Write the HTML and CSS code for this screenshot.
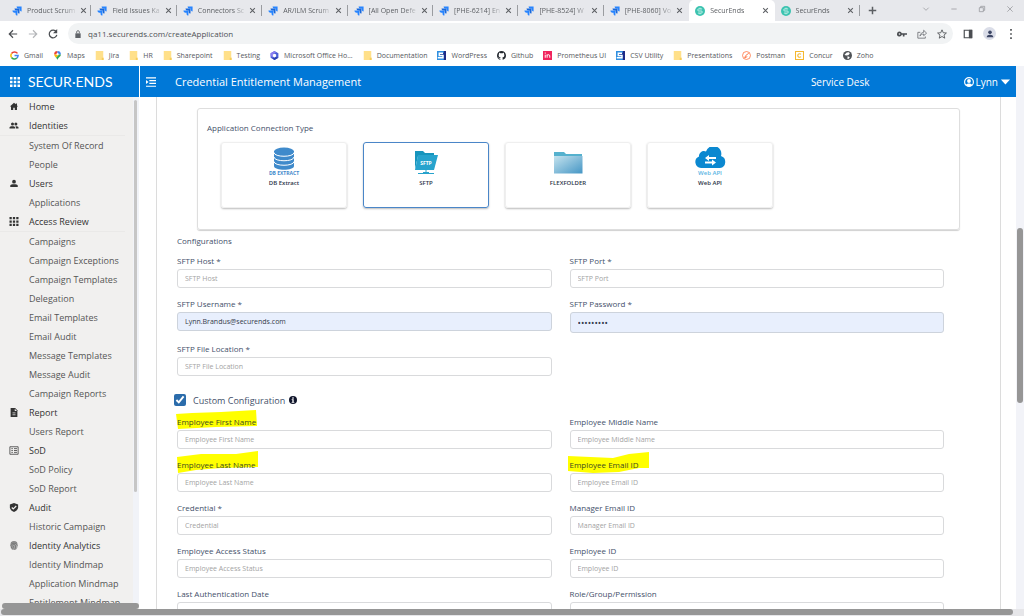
FILE: index.html
```html
<!DOCTYPE html>
<html lang="en">
<head>
    <meta charset="UTF-8">
    <meta name="viewport" content="width=device-width, initial-scale=1.0">
    <title>SecurEnds</title>
    <link rel="stylesheet" href="styles.css">
</head>
<body>

<svg class="sprite" aria-hidden="true">
    <symbol id="i-jira" viewBox="0 0 24 24">
        <path fill="#2684ff" d="M11 1h12v12c-3 0-4.500-2-4.500-4.500V6H16c-3 0-5-2-5-5z"/>
        <path fill="#1868db" d="M6 6h12v12c-3 0-4.500-2-4.500-4.500V11H11c-3 0-5-2-5-5z"/>
        <path fill="#2684ff" d="M1 11h12v12c-3 0-4.500-2-4.500-4.500V16H6c-3 0-5-2-5-5z"/>
    </symbol>
    <symbol id="i-securends" viewBox="0 0 24 24">
        <circle cx="12" cy="12" r="12" fill="#3cc3b0"/>
        <path d="M17 7H9a2.500 2.500 0 0 0 0 5h6a2.500 2.500 0 0 1 0 5H7M12 4v3M12 17v3" fill="none" stroke="#d9f7f2" stroke-width="2"/>
    </symbol>
    <symbol id="i-close" viewBox="0 0 12 12"><path d="M2 2l8 8M10 2l-8 8" stroke="currentColor" stroke-width="1.800"/></symbol>
    <symbol id="i-folder" viewBox="0 0 12 12"><path d="M1 0h10v9h1v3H1z" fill="#ffe08a"/><path d="M11 9v3H9V9z" fill="#f5cd5c"/></symbol>
    <symbol id="i-s" viewBox="0 0 12 12"><path d="M0 0h12v12H0z" fill="#1d2a86"/><path d="M0 0h9v3H4v2h5v7H0z" fill="#2f8fe0"/><path d="M8 3H3v3h5v3H1" fill="none" stroke="#fff" stroke-width="1.800"/></symbol>
    <symbol id="i-grid" viewBox="0 0 12 12"><path d="M0 0h3v3H0zM4.500 0h3v3h-3zM9 0h3v3H9zM0 4.500h3v3H0zM4.500 4.500h3v3h-3zM9 4.500h3v3H9zM0 9h3v3H0zM4.500 9h3v3h-3zM9 9h3v3H9z" fill="currentColor"/></symbol>
</svg>

<nav class="tab-strip" aria-label="Tabs">
    <div class="tabs">
        <div class="tab"><svg class="favicon"><use href="#i-jira"/></svg><span class="tab-title">Product Scrum</span><button aria-label="Close"><svg><use href="#i-close"/></svg></button></div>
        <div class="tab"><svg class="favicon"><use href="#i-jira"/></svg><span class="tab-title">Field Issues Ka</span><button aria-label="Close"><svg><use href="#i-close"/></svg></button></div>
        <div class="tab"><svg class="favicon"><use href="#i-jira"/></svg><span class="tab-title">Connectors Sc</span><button aria-label="Close"><svg><use href="#i-close"/></svg></button></div>
        <div class="tab"><svg class="favicon"><use href="#i-jira"/></svg><span class="tab-title">AR/ILM Scrum</span><button aria-label="Close"><svg><use href="#i-close"/></svg></button></div>
        <div class="tab"><svg class="favicon"><use href="#i-jira"/></svg><span class="tab-title">[All Open Defe</span><button aria-label="Close"><svg><use href="#i-close"/></svg></button></div>
        <div class="tab"><svg class="favicon"><use href="#i-jira"/></svg><span class="tab-title">[PHE-6214] En</span><button aria-label="Close"><svg><use href="#i-close"/></svg></button></div>
        <div class="tab"><svg class="favicon"><use href="#i-jira"/></svg><span class="tab-title">[PHE-8524] W</span><button aria-label="Close"><svg><use href="#i-close"/></svg></button></div>
        <div class="tab no-line"><svg class="favicon"><use href="#i-jira"/></svg><span class="tab-title">[PHE-8060] Vo</span><button aria-label="Close"><svg><use href="#i-close"/></svg></button></div>
        <div class="tab active no-line"><svg class="favicon"><use href="#i-securends"/></svg><span class="tab-title">SecurEnds</span><button aria-label="Close"><svg><use href="#i-close"/></svg></button></div>
        <div class="tab"><svg class="favicon"><use href="#i-securends"/></svg><span class="tab-title">SecurEnds</span><button aria-label="Close"><svg><use href="#i-close"/></svg></button></div>
    </div>
    <button class="new-tab" aria-label="New tab"><svg viewBox="0 0 12 12"><path d="M6 1v10M1 6h10" stroke="currentColor" stroke-width="2"/></svg></button>
    <div class="window-buttons">
        <button aria-label="Search tabs"><svg viewBox="0 0 12 12"><path d="M2 4l4 4 4-4" fill="none" stroke="currentColor"/></svg></button>
        <button aria-label="Minimize"><svg viewBox="0 0 12 12"><path d="M2 6h8" stroke="currentColor"/></svg></button>
        <button aria-label="Restore"><svg viewBox="0 0 12 12"><path d="M2 4h6v6H2zM4 4V2h6v6H8" fill="none" stroke="currentColor"/></svg></button>
        <button aria-label="Close window"><svg viewBox="0 0 12 12"><path d="M2 2l8 8M10 2l-8 8" stroke="currentColor"/></svg></button>
    </div>
</nav>

<div class="toolbar">
    <button aria-label="Back"><svg viewBox="0 0 12 12"><path d="M11 6H2M6 1.500L1.500 6 6 10.500" fill="none" stroke="#4a4d51" stroke-width="1.400"/></svg></button>
    <button aria-label="Forward"><svg viewBox="0 0 12 12"><path d="M1 6h9M6 1.500L10.500 6 6 10.500" fill="none" stroke="#b4b6b9" stroke-width="1.400"/></svg></button>
    <button aria-label="Reload"><svg viewBox="0 0 12 12"><path d="M10 3.500A4.600 4.600 0 1 0 10.600 7" fill="none" stroke="#4a4d51" stroke-width="1.500"/><path d="M11 0v5H6z" fill="#4a4d51"/></svg></button>
    <div class="omnibox">
        <svg class="lock" viewBox="0 0 12 12"><path d="M2 5h8v7H2z" fill="#5f6368"/><path d="M4 5V3a2 2 0 0 1 4 0v2" fill="none" stroke="#5f6368" stroke-width="1.300"/></svg>
        <input class="url" aria-label="Address" value="qa11.securends.com/createApplication">
        <svg viewBox="0 0 12 12"><path d="M3 3a3 3 0 1 0 2.800 4H7v2h2V7h3V5H5.800A3 3 0 0 0 3 3z" fill="#4a4d51"/><circle cx="3" cy="6" r="1" fill="#f1f3f4"/></svg>
        <svg viewBox="0 0 12 12"><path d="M4 4H1v7h9V9M3.500 8.500C4 5.500 6 4 8 4V1.500L11.500 5 8 8V6C6 6 4.500 7 3.500 8.500z" fill="none" stroke="#6c6f73"/></svg>
        <svg viewBox="0 0 12 12"><path d="M6 1l1.500 3.500 3.800.3-2.900 2.500.9 3.700L6 9l-3.300 2 .9-3.700L.7 4.800l3.800-.3z" fill="none" stroke="#4a4d51"/></svg>
    </div>
    <button aria-label="Side panel"><svg viewBox="0 0 12 12"><path d="M1.500 1.500h9v9h-9z" fill="none" stroke="#4a4d51" stroke-width="1.400"/><path d="M7 1h4v10H7z" fill="#4a4d51"/></svg></button>
    <button class="profile" aria-label="Profile"><svg viewBox="0 0 12 12"><circle cx="6" cy="3.500" r="2.700" fill="#3c4664"/><path d="M1 11c0-5 10-5 10 0z" fill="#3c4664"/></svg></button>
    <button aria-label="Menu"><svg viewBox="0 0 12 12"><path d="M5 0h2v2H5zM5 5h2v2H5zM5 10h2v2H5z" fill="#4a4d51"/></svg></button>
</div>

<nav class="bookmarks" aria-label="Bookmarks">
    <a href="#"><svg viewBox="0 0 12 12"><path d="M10 3.200A5 5 0 0 0 2 3.400" fill="none" stroke="#ea4335" stroke-width="2"/><path d="M2 3.400a5 5 0 0 0 0 5.200" fill="none" stroke="#fbbc05" stroke-width="2"/><path d="M2 8.600a5 5 0 0 0 7 1" fill="none" stroke="#34a853" stroke-width="2"/><path d="M9 9.600A5 5 0 0 0 10.800 6H6" fill="none" stroke="#4285f4" stroke-width="2"/></svg>Gmail</a>
    <a href="#"><svg viewBox="0 0 12 12"><path d="M6 0a4.500 4.500 0 0 0-4.500 4.500L6 4.500z" fill="#ea4335"/><path d="M6 0a4.500 4.500 0 0 1 4.500 4.500H6z" fill="#4285f4"/><path d="M1.500 4.500C1.500 6 3 7.500 4 9l4-4.500z" fill="#fbbc05"/><path d="M10.500 4.500C10.500 7.500 7 8 6 12 5.500 10.500 5 10 4 9l4-4.500z" fill="#34a853"/><circle cx="6" cy="4.300" r="1.500" fill="#fff"/></svg>Maps</a>
    <a href="#"><svg><use href="#i-folder"/></svg>Jira</a>
    <a href="#"><svg><use href="#i-folder"/></svg>HR</a>
    <a href="#"><svg><use href="#i-folder"/></svg>Sharepoint</a>
    <a href="#"><svg><use href="#i-folder"/></svg>Testing</a>
    <a href="#"><svg viewBox="0 0 12 12"><path d="M6 0l5.200 3v6L6 12 .8 9V3z" fill="#4b5fd6"/><path d="M6 0L.8 3v4L4 8V4l4-2z" fill="#8a7df0"/><path d="M11.200 9L6 12 3 10l5-2z" fill="#2b3fae"/><path d="M6 3.500l2.200 1.200v2.600L6 8.500 3.800 7.300V4.700z" fill="#fff"/></svg>Microsoft Office Ho...</a>
    <a href="#"><svg><use href="#i-folder"/></svg>Documentation</a>
    <a href="#"><svg><use href="#i-s"/></svg>WordPress</a>
    <a href="#"><svg viewBox="0 0 16 16"><path fill="#24292f" d="M8 0C3.580 0 0 3.580 0 8c0 3.540 2.290 6.530 5.470 7.590.4.070.55-.17.55-.38v-1.490c-2.010.37-2.530-.49-2.690-.94-.09-.23-.48-.94-.82-1.130-.28-.15-.68-.52-.01-.53.63-.01 1.080.58 1.230.82.72 1.210 1.870.87 2.330.66.07-.52.28-.87.51-1.070-1.780-.2-3.640-.89-3.640-3.950 0-.87.31-1.590.82-2.150-.08-.2-.36-1.020.08-2.120 0 0 .67-.21 2.200.82a7.600 7.600 0 0 1 4 0c1.530-1.040 2.200-.82 2.200-.82.44 1.100.16 1.920.08 2.120.51.56.82 1.270.82 2.150 0 3.070-1.870 3.750-3.650 3.950.29.25.54.73.54 1.480v2.200c0 .21.15.46.55.38A8 8 0 0 0 16 8c0-4.420-3.580-8-8-8z"/></svg>Github</a>
    <a href="#"><svg viewBox="0 0 12 12"><path d="M0 0h12v12H0z" fill="#f0245c"/><path d="M3 5v4M3 2v1.500M5.500 9V4.500M5.500 6C6 4.500 9 4.500 9 6.500V9" fill="none" stroke="#fff" stroke-width="1.300"/></svg>Prometheus UI</a>
    <a href="#"><svg><use href="#i-s"/></svg>CSV Utility</a>
    <a href="#"><svg><use href="#i-folder"/></svg>Presentations</a>
    <a href="#"><svg viewBox="0 0 12 12"><circle cx="6" cy="6" r="5.300" fill="#fff" stroke="#ff6c37"/><path d="M9 3L5 6l-1.500 3L7 7.500" fill="none" stroke="#ff6c37" stroke-width="1.200"/></svg>Postman</a>
    <a href="#"><svg viewBox="0 0 12 12"><path d="M.7.7h10.600v10.600H.7z" fill="#fff" stroke="#f5b82e" stroke-width="1.400"/><path d="M8 4.500a2.400 2.400 0 1 0 0 3" fill="none" stroke="#f5b82e" stroke-width="1.500"/></svg>Concur</a>
    <a href="#"><svg viewBox="0 0 12 12"><circle cx="6" cy="6" r="6" fill="#4f5256"/><path d="M5 2l3-.5 1 2-2 2-3 .5-2-1M6 7l3 1-1 2-2 1z" fill="#fff"/></svg>Zoho</a>
</nav>

<div class="viewport">
    <div class="page">
        <aside class="sidebar">
            <div class="brand">
                <svg class="apps"><use href="#i-grid"/></svg>
                <span class="logo">SECUR·ENDS</span>
            </div>
            <div class="side-scroll">
                <ul class="menu">
                    <li><a class="group" href="#"><svg viewBox="0 0 24 24"><path d="M12 2L1 12h3v9h6v-6h4v6h6v-9h3l-3-3V4h-3v2z" fill="currentColor"/></svg>Home</a></li>
                    <li><a class="group" href="#"><svg viewBox="0 0 24 24"><circle cx="8" cy="8" r="4" fill="currentColor"/><circle cx="17" cy="8" r="4" fill="currentColor"/><path d="M0 20v-3c0-4 15-4 15 0v3zM17 20v-3l-1-3c3 0 8 0 8 3v3z" fill="currentColor"/></svg>Identities</a>
                        <ul class="lined"><li><a href="#">System Of Record</a></li><li><a href="#">People</a></li></ul></li>
                    <li><a class="group" href="#"><svg viewBox="0 0 24 24"><circle cx="12" cy="7" r="5" fill="currentColor"/><path d="M2 21v-3c0-5 20-5 20 0v3z" fill="currentColor"/></svg>Users</a>
                        <ul><li><a href="#">Applications</a></li></ul></li>
                    <li><a class="group" href="#"><svg><use href="#i-grid"/></svg>Access Review</a>
                        <ul class="lined">
                            <li><a href="#">Campaigns</a></li>
                            <li><a href="#">Campaign Exceptions</a></li>
                            <li><a href="#">Campaign Templates</a></li>
                            <li><a href="#">Delegation</a></li>
                            <li><a href="#">Email Templates</a></li>
                            <li><a href="#">Email Audit</a></li>
                            <li><a href="#">Message Templates</a></li>
                            <li><a href="#">Message Audit</a></li>
                            <li><a href="#">Campaign Reports</a></li>
                        </ul></li>
                    <li><a class="group" href="#"><svg viewBox="0 0 24 24"><path d="M3 0h12l6 6v18H3z" fill="currentColor"/><path d="M8 13h8M8 18h8" fill="none" stroke="#f1f0ef" stroke-width="2"/><path d="M14 2v6h6z" fill="#f1f0ef"/></svg>Report</a>
                        <ul><li><a href="#">Users Report</a></li></ul></li>
                    <li><a class="group" href="#"><svg viewBox="0 0 24 24"><path d="M1 2h22v20H1z" fill="none" stroke="currentColor" stroke-width="2"/><path d="M5 7h4M5 12h4M5 17h4M12 7h8M12 12h8M12 17h8" stroke="currentColor" stroke-width="2"/></svg>SoD</a>
                        <ul><li><a href="#">SoD Policy</a></li><li><a href="#">SoD Report</a></li></ul></li>
                    <li><a class="group" href="#"><svg viewBox="0 0 24 24"><path d="M12 0L1 4v7c0 6 5 11 11 13 6-2 11-7 11-13V4z" fill="currentColor"/><path d="M6 12l4 4 8-8" fill="none" stroke="#f1f0ef" stroke-width="3"/></svg>Audit</a>
                        <ul><li><a href="#">Historic Campaign</a></li></ul></li>
                    <li><a class="group" href="#"><svg viewBox="0 0 24 24"><path d="M12 0c7 0 10 4 10 11s-3 13-10 13S2 18 2 11 5 0 12 0z" fill="#a8a8a8"/><path d="M4 6c4-5 12-5 16 0M3 12c2-8 16-8 18 0M5 19c2-4 0-6 3-9 3-2 8-1 8 4 0 4-1 6-2 9M8 22c3-5 1-8 4-9" fill="none" stroke="#666" stroke-width="2"/></svg>Identity Analytics</a>
                        <ul>
                            <li><a href="#">Identity Mindmap</a></li>
                            <li><a href="#">Application Mindmap</a></li>
                            <li><a href="#">Entitlement Mindmap</a></li>
                        </ul></li>
                </ul>
                <div class="side-track"><div class="side-thumb"></div></div>
            </div>
            <div class="side-bar-x"></div>
        </aside>

        <main class="main">
            <header class="topbar">
                <button class="toggle" aria-label="Toggle menu"><svg viewBox="0 0 12 12"><path d="M0 1h12M4 4.300h8M4 7.600h8M0 11h12" stroke="currentColor" stroke-width="1.300"/><path d="M0 3.500v5L3 6z" fill="currentColor"/></svg></button>
                <h1>Credential Entitlement Management</h1>
                <a class="service" href="#">Service Desk</a>
                <button class="user"><svg viewBox="0 0 12 12"><circle cx="6" cy="6" r="5.300" fill="none" stroke="currentColor" stroke-width="1.400"/><circle cx="6" cy="4.800" r="2.300" fill="currentColor"/><path d="M2 10c1-3 7-3 8 0-2 2-6 2-8 0z" fill="currentColor"/></svg>Lynn<svg class="caret" viewBox="0 0 12 12"><path d="M1 3h11L6.500 9z" fill="currentColor"/></svg></button>
            </header>

            <div class="content">
                <form class="sheet">
                    <section class="panel">
                        <h2>Application Connection Type</h2>
                        <div class="types">
                            <button type="button" class="type">
                                <svg class="art" viewBox="0 0 34 30"><path d="M7 4v15c0 5 20 5 20 0V4z" fill="#3f8acb"/><ellipse cx="17" cy="4.500" rx="10" ry="4" fill="#3f8acb"/><path d="M7 5.500c0 5 20 5 20 0M7 10c0 5 20 5 20 0M7 14.500c0 5 20 5 20 0" fill="none" stroke="#fff"/><text class="art-bold" x="17" y="28" fill="#3f8acb">DB EXTRACT</text></svg>
                                DB Extract
                            </button>
                            <button type="button" class="type selected">
                                <svg class="art" viewBox="0 0 34 30"><path d="M6 22V4h8l2 2h9v3H9z" fill="#1795bd"/><path d="M9 8h20l-4 15H6z" fill="#27a3cd"/><path d="M17 23v3M9 26.500h16" stroke="#27a3cd"/><path d="M14 25h6v2h-6z" fill="#27a3cd"/><text class="art-bold" x="17" y="18" fill="#fff">SFTP</text></svg>
                                SFTP
                            </button>
                            <button type="button" class="type">
                                <svg class="art" viewBox="0 0 34 30"><defs><linearGradient id="fold" x1="0" y1="0" x2="1" y2="1"><stop offset="0" stop-color="#c5e3ee"/><stop offset="1" stop-color="#4596c5"/></linearGradient></defs><path d="M3 5h10l2 2h16v6H3z" fill="#55b1ce"/><path d="M3 9h28.500v17.500H3z" fill="url(#fold)"/></svg>
                                FLEXFOLDER
                            </button>
                            <button type="button" class="type">
                                <svg class="art" viewBox="0 0 34 30"><path d="M8 21a6 6 0 0 1-2-11.500 5 5 0 0 1 7-5 7.500 7.500 0 0 1 15 4.500 6.200 6.200 0 0 1-1 12z" fill="#0b88d0"/><path d="M15 11h8M12 15.500h8" stroke="#fff" stroke-width="2"/><path d="M16 8v6l-4-3zM19 12.500v6l4-3z" fill="#fff"/><text class="art-text" x="17" y="28" fill="#5ab4e3">Web API</text></svg>
                                Web API
                            </button>
                        </div>
                    </section>

                    <h2 class="section-title">Configurations</h2>
                    <div class="fields">
                        <div class="field"><label for="host">SFTP Host *</label><input id="host" type="text" placeholder="SFTP Host"></div>
                        <div class="field"><label for="port">SFTP Port *</label><input id="port" type="text" placeholder="SFTP Port"></div>
                        <div class="field"><label for="username">SFTP Username *</label><input id="username" class="filled" type="text" value="Lynn.Brandus@securends.com"></div>
                        <div class="field"><label for="password">SFTP Password *</label><input id="password" class="filled" type="password" value="securends"></div>
                        <div class="field"><label for="location">SFTP File Location *</label><input id="location" type="text" placeholder="SFTP File Location"></div>
                    </div>

                    <div class="custom">
                        <input id="custom" type="checkbox" checked>
                        <label for="custom">Custom Configuration</label>
                        <svg viewBox="0 0 12 12"><circle cx="6" cy="6" r="6" fill="#10152b"/><path d="M5 2h2v2H5zM4 5h3v4h1v1H4V9h1V6H4z" fill="#fff"/></svg>
                    </div>

                    <div class="fields">
                        <div class="field"><label class="marked" for="first"><svg class="marker" viewBox="0 0 82 22"><path d="M0 4L16 3 45 2 80 0 81 16 40 17 2 19z"/></svg><span>Employee First Name</span></label><input id="first" type="text" placeholder="Employee First Name"></div>
                        <div class="field"><label for="middle">Employee Middle Name</label><input id="middle" type="text" placeholder="Employee Middle Name"></div>
                        <div class="field"><label class="marked" for="last"><svg class="marker" viewBox="0 0 82 22"><path d="M1 4L25 1 60 1 82-2V14L45 15 20 17 2 20z"/></svg><span>Employee Last Name</span></label><input id="last" type="text" placeholder="Employee Last Name"></div>
                        <div class="field"><label class="marked" for="email"><svg class="marker" viewBox="0 0 82 22"><path d="M-1 3L44 5 60 1 80-1V15H70L50 19 24 20-1 18z"/></svg><span>Employee Email ID</span></label><input id="email" type="text" placeholder="Employee Email ID"></div>
                        <div class="field"><label for="credential">Credential *</label><input id="credential" type="text" placeholder="Credential"></div>
                        <div class="field"><label for="manager">Manager Email ID</label><input id="manager" type="text" placeholder="Manager Email ID"></div>
                        <div class="field"><label for="status">Employee Access Status</label><input id="status" type="text" placeholder="Employee Access Status"></div>
                        <div class="field"><label for="empid">Employee ID</label><input id="empid" type="text" placeholder="Employee ID"></div>
                        <div class="field"><label for="lastauth">Last Authentication Date</label><input id="lastauth" type="text" placeholder="Last Authentication Date"></div>
                        <div class="field"><label for="role">Role/Group/Permission</label><input id="role" type="text" placeholder="Role/Group/Permission"></div>
                    </div>
                </form>
            </div>
        </main>
    </div>
    <div class="track-y"><div class="thumb-y"></div></div>
</div>
<div class="track-x"><div class="thumb-x"></div></div>

</body>
</html>
```

FILE: styles.css
```css
:root {
    --blue: #0078d7;
    --side-bg: #f1f0ef;
    --text: #44506a;
    --thumb: #969696;
}

* {
    box-sizing: border-box;
}

body {
    margin: 0;
    height: 100vh;
    display: flex;
    flex-direction: column;
    overflow: hidden;
    background: #fff;
    color: var(--text);
    font-family: "Open Sans", "Noto Sans", sans-serif;
    font-size: 8px;
}

button {
    display: flex;
    align-items: center;
    justify-content: center;
    padding: 0;
    border: none;
    background: none;
    color: inherit;
    font: inherit;
    cursor: pointer;
}

a {
    color: inherit;
    text-decoration: none;
}

ul {
    margin: 0;
    padding: 0;
    list-style: none;
}

h1, h2 {
    margin: 0;
    font-weight: 400;
}

svg {
    flex: none;
}

.sprite {
    display: none;
}

/* browser tabs */
.tab-strip {
    flex: none;
    display: flex;
    align-items: center;
    height: 21px;
    padding-left: 6px;
    background: #e7e8ec;
    color: #5c5f63;
}

.tabs {
    flex: 0 1 854px;
    display: grid;
    grid-template-columns: repeat(10, minmax(0, 1fr));
    height: 21px;
}

.tab {
    position: relative;
    display: flex;
    align-items: center;
    gap: 5px;
    padding: 0 6px;
    font-size: 7px;
}

.tab::after {
    content: "";
    position: absolute;
    right: 0;
    top: 5px;
    height: 11px;
    border-right: 1px solid #9a9ca0;
}

.no-line::after {
    display: none;
}

.tab.active {
    background: #fff;
    border-radius: 5px 5px 0 0;
}

.favicon {
    width: 10px;
    height: 10px;
}

.tab-title {
    flex: 1;
    white-space: nowrap;
    -webkit-mask-image: linear-gradient(to right, #000 75%, rgba(0, 0, 0, 0.2));
    mask-image: linear-gradient(to right, #000 75%, rgba(0, 0, 0, 0.2));
}

.tab button svg {
    width: 7px;
    height: 7px;
}

.new-tab {
    margin-left: 8px;
}

.new-tab svg {
    width: 9px;
    height: 9px;
}

.window-buttons {
    display: flex;
    gap: 20px;
    margin-left: auto;
    padding: 0 10px 4px 0;
    color: #8b8d91;
}

.window-buttons svg {
    display: block;
    width: 8px;
    height: 8px;
}

/* address bar */
.toolbar {
    flex: none;
    display: flex;
    align-items: center;
    gap: 10px;
    height: 25px;
    padding: 0 8px;
}

.toolbar svg {
    width: 10px;
    height: 10px;
}

.omnibox {
    flex: 1;
    display: flex;
    align-items: center;
    gap: 10px;
    height: 21px;
    padding: 0 6px;
    border-radius: 11px;
    background: #f1f3f4;
}

.omnibox .lock {
    width: 8px;
    height: 8px;
    margin-right: -4px;
}

.url {
    flex: 1;
    border: none;
    padding: 0;
    background: none;
    color: #4e5155;
    font: 8px "Open Sans", sans-serif;
}

.profile {
    width: 13px;
    height: 13px;
    border-radius: 50%;
    background: #dadde8;
}

.profile svg {
    width: 8px;
    height: 8px;
}

.bookmarks {
    flex: none;
    display: flex;
    align-items: center;
    gap: 10px;
    height: 20px;
    padding: 0 10px 1px;
    color: #55585d;
    font-size: 7px;
    white-space: nowrap;
}

.bookmarks a {
    display: flex;
    align-items: center;
    gap: 5px;
}

.bookmarks svg {
    width: 9px;
    height: 9px;
}

/* application */
.viewport {
    flex: 1;
    min-height: 0;
    display: flex;
}

.page {
    flex: 1;
    min-width: 0;
    display: flex;
}

.sidebar {
    flex: none;
    width: 139px;
    display: flex;
    flex-direction: column;
    background: var(--side-bg);
}

.brand {
    flex: none;
    display: flex;
    align-items: center;
    gap: 8px;
    height: 31px;
    padding-left: 10px;
    background: var(--blue);
    color: #fff;
}

.apps {
    width: 10px;
    height: 10px;
}

.logo {
    font-family: Lato, sans-serif;
    font-size: 14px;
}

.side-scroll {
    flex: 1;
    min-height: 0;
    display: flex;
}

.menu {
    flex: 1;
    overflow: hidden;
    color: #555;
    font-size: 9px;
    line-height: 19px;
    white-space: nowrap;
}

.menu a {
    display: block;
    padding-left: 29px;
}

.menu .group {
    display: flex;
    align-items: center;
    gap: 10px;
    padding-left: 9px;
    color: #333;
    font-weight: 500;
}

.menu .group svg {
    width: 10px;
    height: 9px;
}

.lined {
    margin-right: 8px;
    border-top: 1px solid #eae9e8;
}

.side-track {
    width: 6px;
    padding: 3px 2px 0 1px;
    background: #f1f3f8;
}

.side-thumb {
    height: 78%;
    border-radius: 2px;
    background: #c6c6c6;
}

.side-bar-x {
    flex: none;
    height: 6px;
    margin-left: 2px;
    border-radius: 3px;
    background: var(--thumb);
}

.main {
    flex: 1;
    min-width: 0;
    display: flex;
    flex-direction: column;
    margin-left: 1px;
}

.topbar {
    flex: none;
    display: flex;
    align-items: center;
    height: 31px;
    padding: 0 6px;
    background: var(--blue);
    color: #fff;
    font-size: 10px;
    font-weight: 500;
}

.toggle svg {
    width: 10px;
    height: 10px;
}

.topbar h1 {
    margin-left: 19px;
    font-size: 11px;
    font-weight: 500;
}

.service {
    margin-left: auto;
    padding-right: 94px;
}

.user {
    gap: 2px;
}

.user svg {
    width: 10px;
    height: 10px;
}

.content {
    flex: 1;
    min-height: 0;
    padding: 0 15px 0 16px;
    overflow: hidden;
}

.sheet {
    padding: 11px 56px 0 20px;
    border: solid #dcdcdc;
    border-width: 0 1px;
}

.panel {
    margin: 0 -16px 0 20px;
    padding: 13px 9px 21px;
    border: 1px solid #dedede;
    border-radius: 3px;
    box-shadow: 0 1px 1px #d0d0d0;
}

.panel h2,
.section-title {
    font-size: 8px;
    line-height: 12px;
}

.types {
    display: grid;
    grid-template-columns: repeat(4, 126px);
    gap: 16px;
    margin: 8px 0 0 14px;
}

.type {
    flex-direction: column;
    justify-content: flex-start;
    height: 66px;
    padding-top: 4px;
    border: 1px solid #efefef;
    border-radius: 3px;
    box-shadow: 0 1px 2px #bbb;
    color: #2d3448;
    font-size: 6px;
    font-weight: 600;
    line-height: 12px;
}

.type.selected {
    border-color: #4a86c8;
}

.art {
    width: 34px;
    height: 30px;
}

.art text {
    font-family: "Open Sans", sans-serif;
    font-size: 5px;
    text-anchor: middle;
}

.art .art-bold {
    font-weight: 700;
}

.art .art-text {
    font-size: 6px;
}

.section-title {
    margin: 5px 0 8px;
}

.fields {
    display: grid;
    grid-template-columns: 1fr 1fr;
    gap: 10px 18px;
}

.field {
    display: flex;
    flex-direction: column;
    gap: 2px;
}

.field label {
    line-height: 12px;
}

.field input {
    height: 19px;
    width: 100%;
    padding: 0 7px;
    border: 1px solid #d9dadc;
    border-radius: 3px;
    background: #fff;
    color: #333a4a;
    font: 7px "Open Sans", sans-serif;
}

.field input::placeholder {
    color: #a3a3a3;
}

.field .filled {
    background: #e8effd;
    border-color: #cdd3dc;
}

.field input[type="password"] {
    height: 21px;
    font-size: 9px;
}

.marked {
    position: relative;
    color: #3d4a20;
}

/* hand-drawn highlighter stroke behind the label */
.marker {
    position: absolute;
    left: -1px;
    top: -6px;
    width: 82px;
    height: 22px;
    overflow: visible;
    fill: #ff0;
}

.marked span {
    position: relative;
}

.custom {
    display: flex;
    align-items: center;
    gap: 7px;
    margin: 16px 0 8px -3px;
    height: 16px;
    font-size: 9px;
}

.custom input {
    width: 12px;
    height: 12px;
    margin: 0;
    accent-color: #2b6cab;
}

.custom svg {
    width: 8px;
    height: 8px;
    margin-left: -3px;
}

/* scrollbars */
.track-y {
    flex: none;
    display: flex;
    flex-direction: column;
    width: 8px;
    padding: 0 1px;
    background: #f2f3f8;
}

.track-y::before {
    content: "";
    flex: 162;
}

.track-y::after {
    content: "";
    flex: 206;
}

.thumb-y {
    flex: 175;
    border-radius: 3px;
    background: var(--thumb);
}

.track-x {
    flex: none;
    height: 7px;
    padding: 0 11px 1px 1px;
    background: #e6e6e9;
}

.thumb-x {
    height: 6px;
    border-radius: 3px;
    background: var(--thumb);
}
```
